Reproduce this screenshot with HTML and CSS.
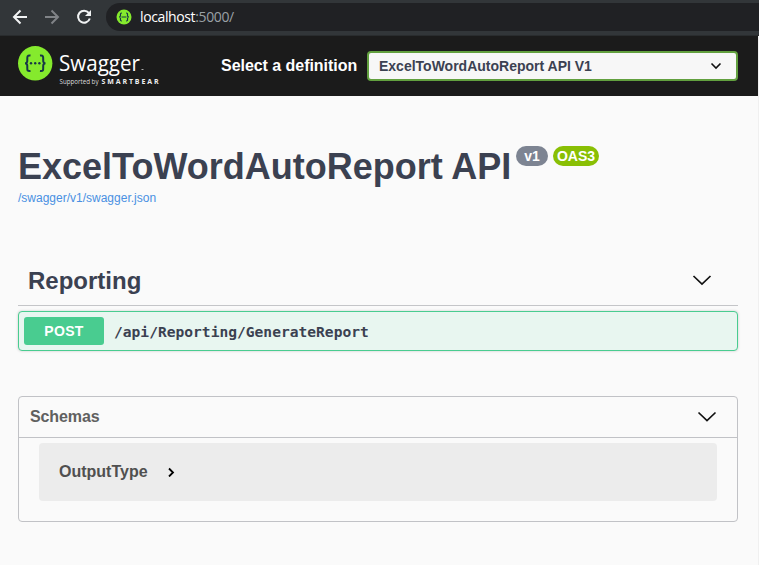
FILE: index.html
```html
<!DOCTYPE html>
<html lang="en">
<head>
<meta charset="utf-8">
<title>Swagger UI</title>
<link rel="stylesheet" href="styles.css">
</head>
<body>
<div class="browser-bar">
  <svg class="nav-icons" width="106" height="35" viewBox="0 0 106 35" fill="none" stroke-width="2">
    <path d="M27 17H14.500M20.500 10.500L14 17l6.500 6.500" stroke="#f1f3f4"/>
    <path d="M45 17h12.500M51.500 10.500L58 17l-6.500 6.500" stroke="#808387"/>
    <path d="M88.800 12.900A6 6 0 1 0 89.800 18.500" stroke="#f1f3f4"/>
    <path d="M91 10v6h-6z" fill="#f1f3f4"/>
  </svg>
  <div class="address">
    <svg width="16" height="16" viewBox="0 0 32 32" fill="none">
      <circle cx="16" cy="16" r="15" fill="#85ea2d"/>
      <path d="M12 8C8 8 9 10 9 13Q9 16 6 16Q9 16 9 19C9 22 8 24 12 24M20 8c4 0 3 2 3 5q0 3 3 3q-3 0-3 3c0 3 1 5-3 5M11 16h10" stroke="#173647" stroke-width="2.400"/>
    </svg>
    <span class="url">localhost<span class="port">:5000/</span></span>
  </div>
</div>
<div class="page">
  <header class="topbar">
    <svg class="logo" width="145" height="48" viewBox="0 0 145 48">
      <circle cx="17.200" cy="21.300" r="17.200" fill="#85ea2d"/>
      <g fill="none" stroke="#173647" stroke-width="2">
        <path d="M12.500 13.500C8.800 13 9.300 15 9.300 18Q9.500 21.300 7 21.300Q9.500 21.300 9.300 24.500C9.300 27.700 8.800 29.500 12.500 29M22 13.500c3.700-.500 3.200 1.500 3.200 4.500q-.2 3.300 2.300 3.300q-2.500 0-2.300 3.200c0 3.200.5 5-3.200 4.500"/>
      </g>
      <g fill="#173647"><circle cx="13" cy="21.300" r="1.200"/><circle cx="17.200" cy="21.300" r="1.200"/><circle cx="21.400" cy="21.300" r="1.200"/></g>
      <text class="brand" x="41" y="28.500" textLength="81" lengthAdjust="spacingAndGlyphs">Swagger</text>
      <path d="M123.500 27.500h2" stroke="#aaa"/>
      <text class="support" x="41.500" y="42" textLength="39" lengthAdjust="spacingAndGlyphs">Supported by</text>
      <text class="maker" x="83.500" y="42" textLength="57">SMARTBEAR</text>
    </svg>
    <span class="definition-label">Select a definition</span>
    <div class="select"><span>ExcelToWordAutoReport API V1</span>
      <svg width="12" height="8" viewBox="0 0 12 8" fill="none" stroke="#111" stroke-width="1.600"><path d="M1.500 1.500L6 6l4.500-4.500"/></svg>
    </div>
  </header>
  <main>
    <section class="info">
      <h1>ExcelToWordAutoReport API</h1>
      <span class="badge version">v1</span><span class="badge oas">OAS3</span>
    </section>
    <a class="spec-link">/swagger/v1/swagger.json</a>
    <section class="tag">
      <h2>Reporting</h2>
      <svg width="20" height="12" viewBox="0 0 20 12" fill="none" stroke="#111" stroke-width="1.700"><path d="M1.500 1L10 9l8.500-8"/></svg>
    </section>
    <div class="operation"><span class="method">POST</span><span class="path">/api/Reporting/GenerateReport</span></div>
    <section class="models">
      <div class="models-head"><h3>Schemas</h3>
        <svg width="20" height="12" viewBox="0 0 20 12" fill="none" stroke="#111" stroke-width="1.700"><path d="M1.500 1.500L10 9.500l8.500-8"/></svg>
      </div>
      <div class="model"><span>OutputType</span>
        <svg width="8" height="10" viewBox="0 0 8 10" fill="none" stroke="#000" stroke-width="1.800"><path d="M2 1.500L6 5.500l-4 4"/></svg>
      </div>
    </section>
  </main>
</div>
</body>
</html>
```
FILE: styles.css
```css
* { box-sizing: border-box; }
body { margin: 0; background: #fafafa; color: #3b4151; font-family: "Liberation Sans", Arial, sans-serif; overflow: hidden; }
svg { display: block; flex: none; }
h1, h2, h3 { margin: 0; }
.browser-bar { display: flex; height: 36px; background: #323639; border-bottom: 1px solid #292c2e; }
.address { display: flex; align-items: center; flex: 1; height: 28px; margin-top: 3px; padding-left: 10px; gap: 8px; border-radius: 14px 0 0 14px; background: #202124; }
.url { color: #fff; font: 14px/28px "Open Sans", sans-serif; letter-spacing: -.38px; }
.port { color: #9aa0a6; }
.page { height: 529px; border-right: 1px solid #f0f0f0; }
.topbar { display: flex; height: 60px; padding: 6px 20px 0 18px; background: #1b1b1b; }
.brand { fill: #fff; font: 400 22.500px "Open Sans", sans-serif; }
.support { fill: #ddd; font: 6.500px "Open Sans", sans-serif; }
.maker { fill: #eee; font: 700 7px "Open Sans", sans-serif; }
.definition-label { width: 136px; margin-left: 58px; color: #fff; font-weight: 700; font-size: 16px; line-height: 48px; letter-spacing: -.04px; white-space: nowrap; }
.select { display: flex; align-items: center; justify-content: space-between; width: 371px; height: 30px; margin: 9px 0 0 10px; padding: 0 14px 0 10px; border: 2px solid #62a03f; border-radius: 4px; background: #f7f7f7; font-size: 14px; font-weight: 700; white-space: nowrap; }
main { padding: 0 20px 0 18px; }
.info { display: flex; height: 94px; padding-top: 50px; }
h1 { width: 493px; font-size: 36px; line-height: 41px; white-space: nowrap; }
.badge { height: 20px; margin-left: 5px; border-radius: 10px; color: #fff; font-size: 14px; font-weight: 700; line-height: 20px; text-align: center; }
.version { width: 32px; background: #7d8492; }
.oas { width: 46px; background: #89bf04; }
.spec-link { display: block; height: 66px; color: #4990e2; font-size: 12px; line-height: 16px; }
.tag { display: flex; align-items: center; justify-content: space-between; height: 50px; padding: 0 26px 0 10px; border-bottom: 1px solid #c4c5c8; }
h2 { font-size: 24px; }
.operation { display: flex; align-items: center; height: 40px; margin-top: 5px; padding-left: 5px; border: 1px solid #49cc90; border-radius: 4px; background: #e8f6f0; box-shadow: 0 0 3px rgba(0,0,0,.19); }
.method { width: 80px; height: 28px; border-radius: 3px; background: #49cc90; color: #fff; font-size: 14px; font-weight: 700; line-height: 28px; letter-spacing: .3px; text-align: center; }
.path { margin-left: 10px; padding-top: 2px; font: 700 14.600px/20px "DejaVu Sans Mono", monospace; }
.models { height: 126px; margin-top: 45px; border: 1px solid #c1c2c6; border-radius: 4px; }
.models-head { display: flex; align-items: center; justify-content: space-between; height: 41px; padding: 0 20px 0 11px; border-bottom: 1px solid #c1c2c6; color: #606060; }
h3 { font-size: 16px; letter-spacing: -.1px; }
.model { display: flex; align-items: center; height: 58px; margin: 5px 20px 0; padding-left: 20px; border-radius: 4px; background: #ececec; color: #505050; font-size: 16px; font-weight: 700; }
.model span { width: 108px; }
```
